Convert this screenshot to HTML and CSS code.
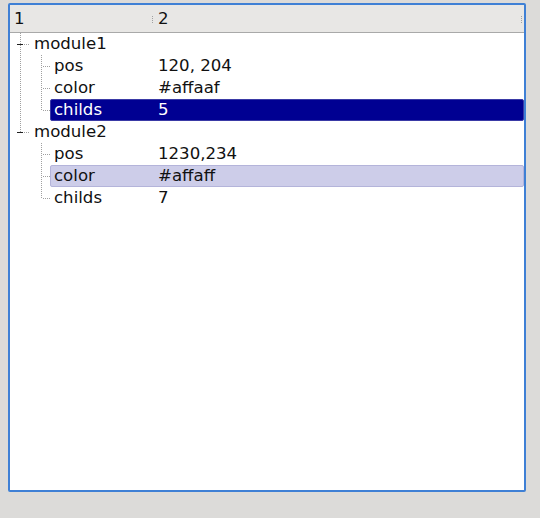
FILE: index.html
```html
<!DOCTYPE html>
<html>
<head>
<meta charset="utf-8">
<link rel="stylesheet" href="styles.css">
</head>
<body>
<div class="frame">
  <div class="header">
    <div class="hcell h1">1</div>
    <div class="grip"></div>
    <div class="hcell h2">2</div>
    <div class="grip end"></div>
  </div>
  <div class="tree">
    <div class="row top">
      <svg class="lines l0" width="24" height="22" viewBox="0 0 24 22"><line x1="10.5" y1="0" x2="10.5" y2="22" class="dot"/><line x1="7" y1="11.5" x2="13" y2="11.5" class="minus"/><line x1="14" y1="11.5" x2="20" y2="11.5" class="dot"/></svg>
      <div class="item"><span class="key k0">module1</span></div>
    </div>
    <div class="row">
      <svg class="lines l1" width="40" height="22" viewBox="0 0 40 22"><line x1="10.5" y1="0" x2="10.5" y2="22" class="dot"/><line x1="31.5" y1="0" x2="31.5" y2="22" class="dot"/><line x1="33" y1="11.5" x2="40" y2="11.5" class="dot"/></svg>
      <div class="item"><span class="key">pos</span><span class="val">120, 204</span></div>
    </div>
    <div class="row">
      <svg class="lines l1" width="40" height="22" viewBox="0 0 40 22"><line x1="10.5" y1="0" x2="10.5" y2="22" class="dot"/><line x1="31.5" y1="0" x2="31.5" y2="22" class="dot"/><line x1="33" y1="11.5" x2="40" y2="11.5" class="dot"/></svg>
      <div class="item"><span class="key">color</span><span class="val">#affaaf</span></div>
    </div>
    <div class="row">
      <svg class="lines l1" width="40" height="22" viewBox="0 0 40 22"><line x1="10.5" y1="0" x2="10.5" y2="22" class="dot"/><line x1="31.5" y1="0" x2="31.5" y2="11" class="dot"/><line x1="33" y1="11.5" x2="40" y2="11.5" class="dot"/></svg>
      <div class="item selected"><span class="key">childs</span><span class="val">5</span></div>
    </div>
    <div class="row top">
      <svg class="lines l0" width="24" height="22" viewBox="0 0 24 22"><line x1="10.5" y1="0" x2="10.5" y2="11" class="dot"/><line x1="7" y1="11.5" x2="13" y2="11.5" class="minus"/><line x1="14" y1="11.5" x2="20" y2="11.5" class="dot"/></svg>
      <div class="item"><span class="key k0">module2</span></div>
    </div>
    <div class="row">
      <svg class="lines l1" width="40" height="22" viewBox="0 0 40 22"><line x1="31.5" y1="0" x2="31.5" y2="22" class="dot"/><line x1="33" y1="11.5" x2="40" y2="11.5" class="dot"/></svg>
      <div class="item"><span class="key">pos</span><span class="val">1230,234</span></div>
    </div>
    <div class="row">
      <svg class="lines l1" width="40" height="22" viewBox="0 0 40 22"><line x1="31.5" y1="0" x2="31.5" y2="22" class="dot"/><line x1="33" y1="11.5" x2="40" y2="11.5" class="dot"/></svg>
      <div class="item hover"><span class="key">color</span><span class="val">#affaff</span></div>
    </div>
    <div class="row">
      <svg class="lines l1" width="40" height="22" viewBox="0 0 40 22"><line x1="31.5" y1="0" x2="31.5" y2="11" class="dot"/><line x1="33" y1="11.5" x2="40" y2="11.5" class="dot"/></svg>
      <div class="item"><span class="key">childs</span><span class="val">7</span></div>
    </div>
  </div>
</div>
</body>
</html>
```
FILE: styles.css
```css
html, body {
  margin: 0;
  padding: 0;
  background: #dcdbd9;
  width: 540px;
  height: 518px;
  overflow: hidden;
}
body {
  font-family: "DejaVu Sans", sans-serif;
  font-size: 16.6px;
  color: #111111;
  padding-top: 3px;
  padding-left: 8px;
  box-sizing: border-box;
}
.frame {
  width: 518px;
  height: 489px;
  box-sizing: border-box;
  border: 2px solid #3f80d5;
  border-radius: 2px;
  background: #ffffff;
  display: flex;
  flex-direction: column;
}
.header {
  height: 28px;
  box-sizing: border-box;
  background: #e8e7e5;
  border-bottom: 1px solid #a9a9a9;
  display: flex;
  align-items: center;
}
.hcell {
  line-height: 26px;
}
.h1 {
  width: 138px;
  padding-left: 4px;
}
.h2 {
  flex: 1;
  padding-left: 5px;
}
.grip {
  width: 0;
  height: 7px;
  border-left: 1px dotted #a0a0a0;
  margin-top: 1px;
}
.grip.end {
  margin-right: 2px;
}
.tree {
  display: flex;
  flex-direction: column;
}
.row {
  display: flex;
  height: 22px;
}
.lines {
  display: block;
  flex: none;
}
.dot {
  stroke: #a0a0a0;
  stroke-width: 1;
  stroke-dasharray: 1 1;
  shape-rendering: crispEdges;
}
.minus {
  stroke: #202020;
  stroke-width: 1;
  shape-rendering: crispEdges;
}
.item {
  flex: 1;
  display: flex;
  align-items: center;
  box-sizing: border-box;
  height: 22px;
  border: 1px solid transparent;
  border-radius: 2px;
  padding-left: 3px;
  padding-bottom: 1px;
}
.top .item {
  padding-left: 0;
  border: none;
}
.key {
  width: 104px;
}
.k0 {
  width: 124px;
}
.val {
  flex: 1;
}
.selected {
  background: #000092;
  border-color: #3a3aa6;
  color: #ffffff;
}
.hover {
  background: #cdcde9;
  border-color: #b4b4da;
}
```
